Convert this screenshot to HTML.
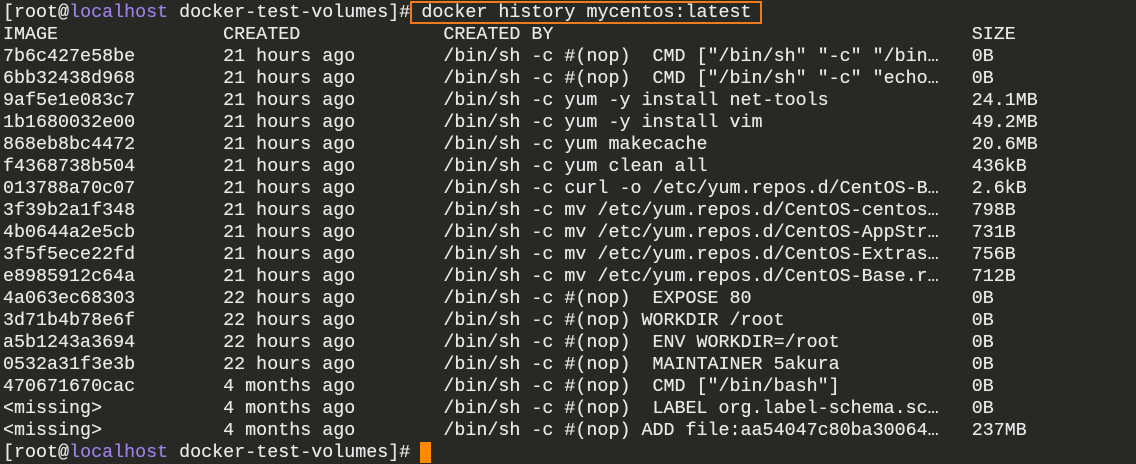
<!DOCTYPE html>
<html><head><style>
html,body{margin:0;padding:0;background:#282825;width:1136px;height:463px;overflow:hidden}
pre{margin:0;position:absolute;left:3px;top:2px;font-family:"Liberation Mono","DejaVu Sans Mono",monospace;font-size:18.35px;line-height:22px;color:#e8e8e8;white-space:pre;text-shadow:0 0 0.4px #e8e8e8}
.p{color:#9b7fe6;text-shadow:0 0 0.4px #9b7fe6}
.box{position:absolute;left:410px;top:1px;width:348px;height:19px;border:2px solid #f07a1c}
.cur{position:absolute;left:420px;top:442px;width:11px;height:21px;background:#ff8a00}
</style></head><body>
<pre>[root@<span class="p">localhost</span> docker-test-volumes]# docker history mycentos:latest
IMAGE               CREATED             CREATED BY                                      SIZE
7b6c427e58be        21 hours ago        /bin/sh -c #(nop)  CMD ["/bin/sh" "-c" "/bin…   0B
6bb32438d968        21 hours ago        /bin/sh -c #(nop)  CMD ["/bin/sh" "-c" "echo…   0B
9af5e1e083c7        21 hours ago        /bin/sh -c yum -y install net-tools             24.1MB
1b1680032e00        21 hours ago        /bin/sh -c yum -y install vim                   49.2MB
868eb8bc4472        21 hours ago        /bin/sh -c yum makecache                        20.6MB
f4368738b504        21 hours ago        /bin/sh -c yum clean all                        436kB
013788a70c07        21 hours ago        /bin/sh -c curl -o /etc/yum.repos.d/CentOS-B…   2.6kB
3f39b2a1f348        21 hours ago        /bin/sh -c mv /etc/yum.repos.d/CentOS-centos…   798B
4b0644a2e5cb        21 hours ago        /bin/sh -c mv /etc/yum.repos.d/CentOS-AppStr…   731B
3f5f5ece22fd        21 hours ago        /bin/sh -c mv /etc/yum.repos.d/CentOS-Extras…   756B
e8985912c64a        21 hours ago        /bin/sh -c mv /etc/yum.repos.d/CentOS-Base.r…   712B
4a063ec68303        22 hours ago        /bin/sh -c #(nop)  EXPOSE 80                    0B
3d71b4b78e6f        22 hours ago        /bin/sh -c #(nop) WORKDIR /root                 0B
a5b1243a3694        22 hours ago        /bin/sh -c #(nop)  ENV WORKDIR=/root            0B
0532a31f3e3b        22 hours ago        /bin/sh -c #(nop)  MAINTAINER 5akura            0B
470671670cac        4 months ago        /bin/sh -c #(nop)  CMD ["/bin/bash"]            0B
&lt;missing&gt;           4 months ago        /bin/sh -c #(nop)  LABEL org.label-schema.sc…   0B
&lt;missing&gt;           4 months ago        /bin/sh -c #(nop) ADD file:aa54047c80ba30064…   237MB
[root@<span class="p">localhost</span> docker-test-volumes]# </pre>
<div class="box"></div>
<div class="cur"></div>
</body></html>
